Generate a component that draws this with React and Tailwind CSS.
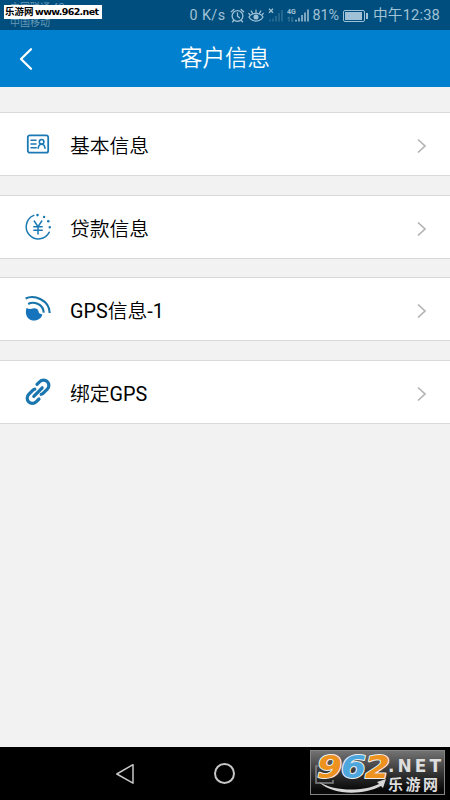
const IdCardIcon = () => (
  <svg width="24" height="22" viewBox="0 0 24 22" fill="none" stroke="#1b7ab3" strokeLinecap="round">
    <rect x="1.8" y="2.3" width="20.4" height="17.4" rx="2" strokeWidth="1.8" />
    <path d="M5 7.3h5M5 11.1h5M5 14.8h5.2" strokeWidth="1.5" />
    <circle cx="15.6" cy="8.8" r="2.3" strokeWidth="1.6" />
    <path d="M12.2 15.3c.2-2.4 1.3-4.1 3.4-4.1s3.2 1.7 3.4 4.1" strokeWidth="1.6" />
  </svg>
);

const LoanIcon = () => (
  <svg width="28" height="28" viewBox="0 0 28 28" fill="none" stroke="#1b7ab3" strokeLinecap="round">
    <path d="M9.8 2.4A12.2 12.2 0 1 0 25.3 19.2" strokeWidth="1.5" />
    <path d="M10.2 8l3.8 5.6L17.8 8M14 13.6V21M9.8 13.7h8.4M9.8 17.2h8.4" strokeWidth="1.5" />
    <g fill="#1b7ab3" stroke="none">
      <circle cx="13.5" cy="2.1" r="1.3" />
      <circle cx="20.1" cy="3.9" r="1.2" />
      <circle cx="24.3" cy="8.3" r="1.3" />
      <circle cx="25.8" cy="14.2" r="1.2" />
    </g>
  </svg>
);

const SatelliteIcon = () => (
  <svg width="28" height="28" viewBox="0 0 28 28" fill="none">
    <path d="M2.6 13c2 1.2 4.4 1.2 6.4.5 2-.7 4.2 0 5 1.6.7 1.3.5 2.5 1.6 3.4.9.6 2 .6 2.8 1.1-.8 3.6-4.3 6-8.1 6-5 0-8.4-3.800-8.400-8.100 0-1.600.1-3.200.7-4.500Z" fill="#1674bd" />
    <path d="M1.6 3.5C10-.6 25.4 4.7 25.7 18" stroke="#1674a8" strokeWidth="2.1" />
    <path d="M4.2 9C9 6.3 19 8.3 19.8 17.7" stroke="#1674a8" strokeWidth="2.1" />
  </svg>
);

const LinkIcon = () => (
  <svg width="28" height="28" viewBox="0 0 28 28" fill="none" stroke="#1b76b0" strokeWidth="3.2" strokeLinecap="round" strokeLinejoin="round">
    <path d="M13 6.4 15.8 3.700a5.200 5.200 0 0 1 7.500 0 5.200 5.200 0 0 1 0 7.400l-4 4a4.500 4.500 0 0 1-2.100 1.200" />
    <path d="m15 21-2.900 2.800a5.200 5.200 0 0 1-7.400 0 5.200 5.200 0 0 1 0-7.400l4-4a4.500 4.500 0 0 1 2.100-1.200" />
    <path d="m9.800 18.300 8.400-8.500" />
  </svg>
);

const rows = [
  { id: "basic", label: "基本信息", icon: <IdCardIcon />, gap: "mt-[25px]" },
  { id: "loan", label: "贷款信息", icon: <LoanIcon />, gap: "mt-[19px]" },
  {
    id: "gps",
    label: <><span className="font-normal">GPS</span>信息<span className="font-normal">-1</span></>,
    icon: <SatelliteIcon />,
    gap: "mt-[18px]",
  },
  {
    id: "bind",
    label: <>绑定<span className="font-normal">GPS</span></>,
    icon: <LinkIcon />,
    gap: "mt-[19px]",
  },
];

function StatusBar() {
  return (
    <div className="relative h-[30px] flex-shrink-0 overflow-hidden bg-[#004e7d] text-[#a1c2d6]">
      <div className="absolute left-[10px] top-[2px] text-[10px] leading-[12px] text-[#6699b8]">
        <p>中国联通 4G</p>
        <p className="mt-[3px]">中国移动</p>
      </div>
      <div className="absolute left-1 top-[5px] flex h-[14px] w-[98px] items-center bg-white pl-px text-black">
        <span className="w-[30px] whitespace-nowrap text-[9.5px] font-bold leading-none">乐游网</span>
        <span className="font-['DejaVu_Sans',sans-serif] text-[9.5px] font-bold leading-none tracking-[-0.65px]">www.962.net</span>
      </div>

      <div className="flex h-full items-center justify-end pr-[10px] pt-px text-[14.3px] leading-none">
        <span className="tracking-[0.4px]">0 K/s</span>
        <svg className="ml-[5px]" width="15" height="16" viewBox="0 0 14 16" fill="none" stroke="currentColor" strokeWidth="1.3" strokeLinecap="round">
          <circle cx="7" cy="8" r="5.4" />
          <path d="M7 5v3.2l2 1.6M.8 3.7 3.4 1.5M13.2 3.7 10.6 1.5M3.2 12.5l-1.2 1.3M10.8 12.5l1.2 1.3" />
        </svg>
        <svg className="ml-[3px]" width="16" height="16" viewBox="0 0 16 16" fill="none" stroke="currentColor" strokeWidth="1.3" strokeLinecap="round">
          <path d="M1 9c3.2-4.8 10.8-4.8 14 0-3.2 5.4-10.8 5.4-14 0Z" />
          <circle cx="8" cy="9" r="1.9" fill="currentColor" />
          <path d="M8 4.3V2.2M4.5 5.1 3.2 3M11.5 5.1 12.8 3M1.7 6.6.8 5.4M14.3 6.6l.9-1.2" />
        </svg>
        <svg className="ml-[4px]" width="16" height="16" viewBox="0 0 16 16">
          <path d="m1 .8 4 4m0-4-4 4" stroke="currentColor" strokeWidth="1.3" />
          <path d="M2 11.5v2M5 10.5v3M8 8V13.5M11 5V13.5M14 2V13.5" stroke="#2f6f96" strokeWidth="1.5" />
        </svg>
        <svg className="ml-[3px]" width="23" height="16" viewBox="0 0 23 16">
          <text x="0" y="6.3" fontSize="7" fontWeight="700" fill="currentColor">4G</text>
          <path d="M2 13.5V9M.7 10.5 2 8.8M5 9V13.5m1.3-1.5L5 13.7" stroke="#477f9f" fill="none" />
          <path d="M9 11.7V13.5M12 9.7V13.5M15 7V13.5M18 4.5V13.5M21 1.5V13.5" stroke="currentColor" strokeWidth="1.5" />
        </svg>
        <span className="ml-[2px] text-[14.3px]">81%</span>
        <span className="ml-[4px] flex h-[12px] w-[22px] rounded-[2px] border border-current p-[1px]">
          <span className="h-full w-[17px] bg-current" />
        </span>
        <span className="ml-[1px] h-[6px] w-[2px] bg-current" />
        <span className="ml-[5px] whitespace-nowrap text-[14.7px] tracking-[0.15px]">中午12:38</span>
      </div>
    </div>
  );
}

function SiteBadge() {
  return (
    <svg className="absolute left-[310px] top-[2px] overflow-visible" width="135" height="47" viewBox="0 0 135 47">
      <defs>
        <linearGradient id="badge" x1="0" y1="0" x2="0" y2="1">
          <stop offset="0" stopColor="#747474" />
          <stop offset=".48" stopColor="#383838" />
          <stop offset=".9" stopColor="#080808" />
        </linearGradient>
      </defs>
      <rect x=".5" y="1.5" width="134" height="44" fill="url(#badge)" stroke="#858585" />
      <path d="M8 17H6v17h17v-3" fill="none" stroke="#858585" strokeWidth="1.5" />
      <path d="M9 33c16 9.5 43 10 60 2l-2-2 9-3-3 9-2-2C52 47 22 46 9 33Z" fill="#d7d7d7" />
      <g fontFamily="DejaVu Sans, sans-serif" fontWeight="700" fontStyle="italic" fontSize="32" stroke="#eee" strokeWidth="2" paintOrder="stroke" strokeLinejoin="round">
        <text x="7" y="28.5" fill="#ed921f" textLength="25" lengthAdjust="spacingAndGlyphs">9</text>
        <text x="31" y="28.5" fill="#4da7dd" textLength="25" lengthAdjust="spacingAndGlyphs">6</text>
        <text x="55" y="28.5" fill="#ed921f" textLength="25" lengthAdjust="spacingAndGlyphs">2</text>
      </g>
      <text x="78" y="23" fill="#dedede" fontFamily="DejaVu Sans, sans-serif" fontSize="17" fontWeight="700" textLength="53" lengthAdjust="spacing">.NET</text>
      <text x="78" y="40.5" fill="#dedede" fontSize="15" fontWeight="700" textLength="50">乐游网</text>
    </svg>
  );
}

export default function App() {
  return (
    <div className="flex h-[800px] w-[450px] flex-col overflow-hidden bg-[#f2f2f2] font-['Roboto','Noto_Sans_CJK_SC',sans-serif]">
      <StatusBar />

      <header className="grid h-[57px] flex-shrink-0 grid-cols-[60px_1fr_60px] items-center bg-[#0080ce] text-white">
        <button className="flex h-full items-center pl-[18px]" aria-label="返回">
          <svg width="16" height="24" viewBox="0 0 16 24" fill="none">
            <path d="M13 2.2 3 12l10 9.8" stroke="currentColor" strokeWidth="2.3" strokeLinecap="round" strokeLinejoin="round" />
          </svg>
        </button>
        <h1 className="text-center text-[22.5px] font-[350] leading-none">客户信息</h1>
      </header>

      <main className="flex-1">
        {rows.map((row) => (
          <button
            key={row.id}
            className={`flex h-16 w-full items-center border-y border-[#d9d9d9] bg-white text-left ${row.gap}`}
          >
            <span className="ml-6 flex w-7 justify-center">{row.icon}</span>
            <span className="ml-[18px] flex-1 pt-[5px] text-[19.8px] font-[350] leading-6 text-black">{row.label}</span>
            <svg className="mr-[22px] mt-[4px]" width="12" height="16" viewBox="0 0 12 16" fill="none">
              <path d="m2 1.5 7 6.5-7 6.5" stroke="#b3b3b3" strokeWidth="1.7" />
            </svg>
          </button>
        ))}
      </main>

      <nav className="relative flex h-[53px] flex-shrink-0 items-center bg-black">
        <svg className="ml-[115px]" width="20" height="22" viewBox="0 0 20 22" fill="none">
          <path d="M18 1.7v18.5L1.8 11Z" stroke="#c7c7c7" strokeWidth="1.5" strokeLinejoin="round" />
        </svg>
        <span className="ml-[79px] h-[21px] w-[21px] rounded-full border-2 border-[#c7c7c7]" />
        <SiteBadge />
      </nav>
    </div>
  );
}
